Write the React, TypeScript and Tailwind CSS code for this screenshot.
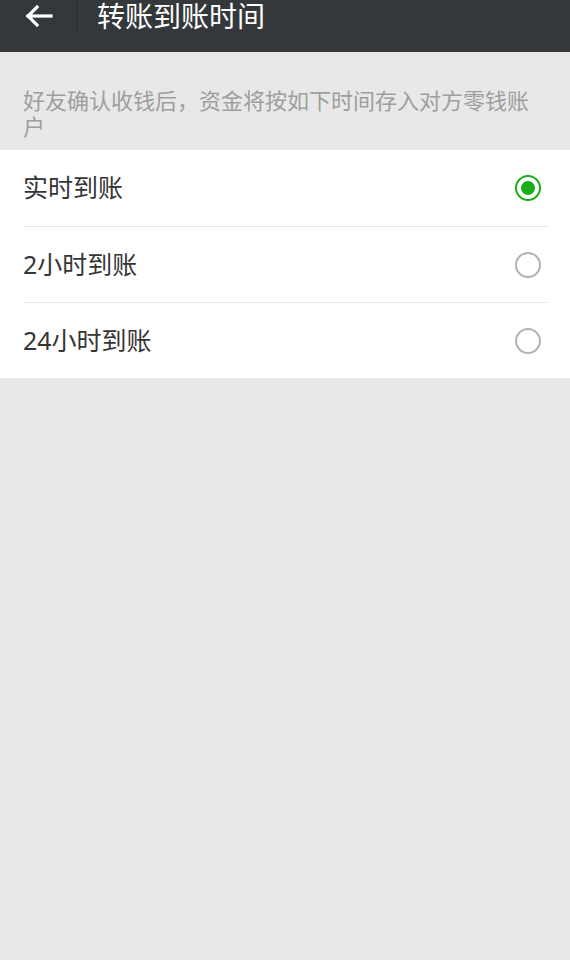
import React, { useState } from 'react';

const options = ['实时到账', '2小时到账', '24小时到账'];

const Radio: React.FC<{ checked: boolean }> = ({ checked }) =>
  checked ? (
    <span className="flex h-[26px] w-[26px] shrink-0 items-center justify-center rounded-full border-[2.5px] border-[#1aad19]">
      <span className="h-[14px] w-[14px] rounded-full bg-[#1aad19]" />
    </span>
  ) : (
    <span className="block h-[26px] w-[26px] shrink-0 rounded-full border-2 border-[#b2b2b2]" />
  );

const App: React.FC = () => {
  const [selected, setSelected] = useState(0);

  return (
    <div
      className="min-h-[960px] bg-[#e8e8e8]"
      style={{ fontFamily: '"Noto Sans", "Noto Sans CJK SC", sans-serif' }}
    >
      <header className="h-[52px] bg-[#35383b]">
        <div className="flex h-[32px] items-center">
          <button className="flex w-[76px] items-center pl-[24px] text-white">
            <svg width="30" height="26" viewBox="0 0 30 26" fill="none" stroke="currentColor" strokeWidth="3.2" strokeLinecap="square">
              <path d="M4 13 H27" />
              <path d="M13 4 L4 13 L13 22" />
            </svg>
          </button>
          <div className="h-[32px] w-px bg-[#2a2c2e]" />
          <h1 className="pl-[20px] text-[28px] leading-[32px] text-white">转账到账时间</h1>
        </div>
      </header>

      <p className="px-[23px] pt-[35px] pb-[11px] text-[22px] leading-[26px] text-[#9e9e9e]">
        好友确认收钱后，资金将按如下时间存入对方零钱账户
      </p>

      <ul className="bg-white">
        {options.map((label, i) => (
          <li key={label} onClick={() => setSelected(i)} className="pl-[23px]">
            <div
              className={`mr-[23px] flex h-[76px] items-center justify-between pr-[6px] ${
                i > 0 ? 'border-t border-[#e5e5e5]' : ''
              }`}
            >
              <span className="text-[25px] text-[#353535]">{label}</span>
              <Radio checked={selected === i} />
            </div>
          </li>
        ))}
      </ul>
    </div>
  );
};

export default App;
